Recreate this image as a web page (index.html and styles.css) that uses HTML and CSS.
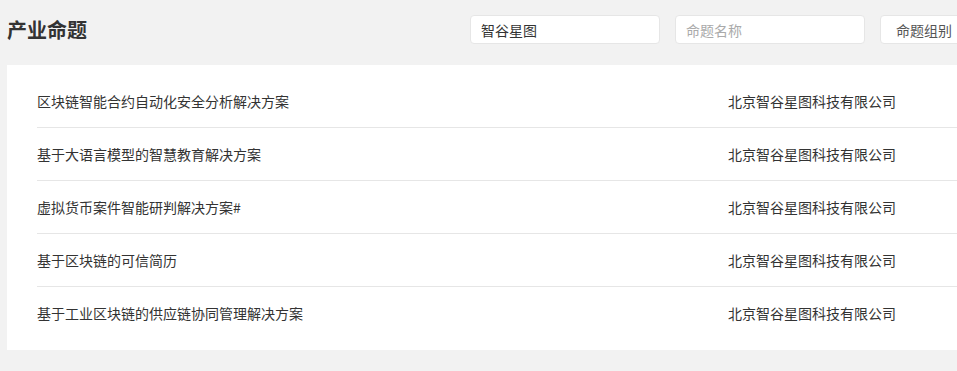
FILE: index.html
```html
<!DOCTYPE html>
<html lang="zh-CN">

<head>
    <meta charset="UTF-8">
    <meta name="viewport" content="width=device-width, initial-scale=1.0">
    <title>产业命题</title>
    <link rel="stylesheet" href="styles.css">
</head>

<body>
    <div class="page">
        <div class="header">
            <h1>产业命题</h1>
            <div class="filters">
                <input type="text" class="field" value="智谷星图">
                <input type="text" class="field" placeholder="命题名称">
                <select class="field field-select">
                    <option>命题组别</option>
                </select>
            </div>
        </div>

        <div class="card">
            <div class="row">
                <span class="name">区块链智能合约自动化安全分析解决方案</span>
                <span class="company">北京智谷星图科技有限公司</span>
            </div>
            <div class="row">
                <span class="name">基于大语言模型的智慧教育解决方案</span>
                <span class="company">北京智谷星图科技有限公司</span>
            </div>
            <div class="row">
                <span class="name">虚拟货币案件智能研判解决方案#</span>
                <span class="company">北京智谷星图科技有限公司</span>
            </div>
            <div class="row">
                <span class="name">基于区块链的可信简历</span>
                <span class="company">北京智谷星图科技有限公司</span>
            </div>
            <div class="row">
                <span class="name">基于工业区块链的供应链协同管理解决方案</span>
                <span class="company">北京智谷星图科技有限公司</span>
            </div>
        </div>
    </div>
</body>

</html>
```

FILE: styles.css
```css
html,
body {
    margin: 0;
    overflow: hidden;
}

body {
    font-family: "Noto Sans CJK SC", "Noto Sans", sans-serif;
    background-color: #f2f2f2;
    color: #333;
}

.page {
    width: 1077px;
    padding: 0 7px;
    box-sizing: border-box;
}

.header {
    display: flex;
    align-items: center;
    justify-content: space-between;
    padding: 15px 0 21px;
}

h1 {
    margin: 0;
    font-size: 20px;
    font-weight: bold;
    color: #333;
    line-height: 29px;
}

.filters {
    display: flex;
    gap: 15px;
}

.field {
    width: 190px;
    height: 29px;
    box-sizing: border-box;
    padding: 0 10px;
    border: 1px solid #e6e6e6;
    border-radius: 4px;
    background-color: #fff;
    font-family: inherit;
    font-size: 14px;
    color: #333;
    outline: none;
}

.field::placeholder {
    color: #aaa;
}

.field-select {
    appearance: none;
    -webkit-appearance: none;
    padding-left: 15px;
    color: #555;
}

.card {
    background-color: #fff;
    padding: 10px 30px 11px;
}

.row {
    display: grid;
    grid-template-columns: 691px 1fr;
    align-items: center;
    height: 52px;
    font-size: 14px;
    color: #333;
    border-bottom: 1px solid #e6e6e6;
}

.row:last-child {
    border-bottom: none;
}
```
